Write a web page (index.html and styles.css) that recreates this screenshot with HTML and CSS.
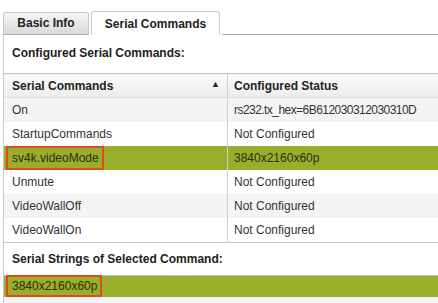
FILE: index.html
```html
<!DOCTYPE html>
<html lang="en">
<head>
<meta charset="UTF-8">
<title>Serial Commands</title>
<link rel="stylesheet" href="styles.css">
</head>
<body>
    <div class="tabs">
        <div class="tab">Basic Info</div>
        <div class="tab active">Serial Commands</div>
        <div class="tab-fill"></div>
    </div>
    <div class="panel">
        <h2 class="section-title">Configured Serial Commands:</h2>
        <table class="grid">
            <thead>
                <tr>
                    <th class="col-cmd">Serial Commands <span class="sort">&#9650;</span></th>
                    <th>Configured Status</th>
                </tr>
            </thead>
            <tbody>
                <tr class="odd"><td>On</td><td class="hex">rs232.tx_hex=6B612030312030310D</td></tr>
                <tr><td>StartupCommands</td><td>Not Configured</td></tr>
                <tr class="odd selected"><td><span class="mark">sv4k.videoMode</span></td><td>3840x2160x60p</td></tr>
                <tr><td>Unmute</td><td>Not Configured</td></tr>
                <tr class="odd"><td>VideoWallOff</td><td>Not Configured</td></tr>
                <tr><td>VideoWallOn</td><td>Not Configured</td></tr>
            </tbody>
        </table>
        <h2 class="section-title second">Serial Strings of Selected Command:</h2>
        <div class="strings">
            <div class="string-row selected"><span class="mark">3840x2160x60p</span></div>
            <div class="string-row odd"></div>
        </div>
    </div>
</body>
</html>
```

FILE: styles.css
```css
html, body {
    margin: 0;
    background-color: #ffffff;
    overflow: hidden;
}
body {
    font-family: 'Liberation Sans', Arial, sans-serif;
    font-size: 12px;
    color: #333333;
    width: 438px;
    height: 303px;
}
.tabs {
    display: flex;
    align-items: flex-end;
    padding: 11px 0 0 3px;
    height: 24px;
}
.tab {
    box-sizing: border-box;
    height: 23px;
    width: 86px;
    margin-right: 2px;
    border: 1px solid #c8c8c8;
    border-bottom: 1px solid #aaaaaa;
    border-radius: 3px 3px 0 0;
    background: linear-gradient(#f6f6f6, #d9d9d9);
    font-weight: bold;
    color: #222222;
    text-align: center;
    line-height: 21px;
}
.tab.active {
    height: 24px;
    width: 129px;
    background: #ffffff;
    border-bottom: 1px solid #ffffff;
    line-height: 24px;
}
.tab-fill {
    flex: 1;
    border-bottom: 1px solid #aaaaaa;
}
.panel {
    border-left: 1px solid #cccccc;
    margin-left: 3px;
    height: 268px;
}
.section-title {
    margin: 0;
    font-size: 12px;
    font-weight: bold;
    color: #222222;
    padding-left: 8px;
    height: 38px;
    line-height: 36px;
}
.section-title.second {
    height: 32px;
    line-height: 32px;
}
.grid {
    border-collapse: collapse;
    width: 434px;
    table-layout: fixed;
    border-top: 1px solid #c4c4c4;
    border-bottom: 1px solid #c4c4c4;
}
.grid th, .grid td {
    height: 24px;
    padding: 0 0 0 6px;
    text-align: left;
    white-space: nowrap;
    overflow: hidden;
}
.grid th:first-child, .grid td:first-child {
    padding-left: 8px;
    border-right: 1px solid #cfcfcf;
}
.grid th {
    height: 23px;
    background: linear-gradient(#fbfbfb, #ececec);
    color: #222222;
    border-bottom: 1px solid #dddddd;
}
.grid .col-cmd {
    width: 215px;
}
.grid td.hex {
    letter-spacing: -0.55px;
}
.sort {
    float: right;
    font-size: 9px;
    margin-right: 7px;
    color: #222222;
}
.grid tr.odd td, .string-row.odd {
    background-color: #f4f4f4;
}
.grid tr.selected td, .string-row.selected {
    background-color: #9bae2b;
    color: #2c2c14;
}
.grid tr.selected td:first-child {
    padding-left: 2px;
}
.mark {
    display: inline-block;
    box-sizing: border-box;
    height: 24px;
    line-height: 20px;
    padding: 0 3px 0 4px;
    border: 2px solid #e04a1e;
    vertical-align: top;
}
.strings {
    border-top: 1px solid #c4c4c4;
}
.string-row {
    height: 21px;
    padding-left: 2px;
}
.string-row .mark {
    height: 22px;
    line-height: 18px;
    margin-top: -1px;
}
```
